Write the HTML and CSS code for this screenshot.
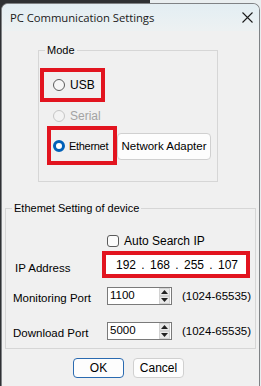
FILE: index.html
```html
<!DOCTYPE html>
<html>
<head>
<meta charset="utf-8">
<link rel="stylesheet" href="styles.css">
</head>
<body>
<div class="window">
  <div class="titlebar">
    <span class="title">PC Communication Settings</span>
    <svg class="close" width="11" height="11" viewBox="0 0 11 11"><path d="M0.5 0.5 L10.5 10.5 M10.5 0.5 L0.5 10.5" stroke="#1b1b1b" stroke-width="1.1" fill="none"/></svg>
  </div>

  <fieldset class="group mode">
    <legend>Mode</legend>
    <div class="hl usb">
      <span class="radio"></span><span class="lbl">USB</span>
    </div>
    <div class="row serial">
      <span class="radio disabled"></span><span class="lbl dim">Serial</span>
    </div>
    <div class="eth-row">
      <div class="hl eth">
        <span class="radio checked"></span><span class="lbl">Ethernet</span>
      </div>
      <button class="btn netadapter">Network Adapter</button>
    </div>
  </fieldset>

  <fieldset class="group ethset">
    <legend>Ethemet Setting of device</legend>
    <div class="row auto">
      <span class="check"></span><span class="lbl">Auto Search IP</span>
    </div>
    <div class="field-row ip-row">
      <span class="flabel ip-label">IP Address</span>
      <div class="hl ipbox">
        <div class="ipfield">
          <span class="oct">192</span><span class="dot">.</span>
          <span class="oct">168</span><span class="dot">.</span>
          <span class="oct">255</span><span class="dot">.</span>
          <span class="oct">107</span>
        </div>
      </div>
    </div>
    <div class="field-row port-row mon">
      <span class="flabel">Monitoring Port</span>
      <div class="spin">
        <span class="val">1100</span>
        <span class="spinbtns">
          <span class="sb"><svg width="7" height="4" viewBox="0 0 7 4"><path d="M3.5 0 L7 4 L0 4 Z" fill="#222"/></svg></span>
          <span class="sb"><svg width="7" height="4" viewBox="0 0 7 4"><path d="M0 0 L7 0 L3.5 4 Z" fill="#222"/></svg></span>
        </span>
      </div>
      <span class="range">(1024-65535)</span>
    </div>
    <div class="field-row port-row dl">
      <span class="flabel">Download Port</span>
      <div class="spin">
        <span class="val">5000</span>
        <span class="spinbtns">
          <span class="sb"><svg width="7" height="4" viewBox="0 0 7 4"><path d="M3.5 0 L7 4 L0 4 Z" fill="#222"/></svg></span>
          <span class="sb"><svg width="7" height="4" viewBox="0 0 7 4"><path d="M0 0 L7 0 L3.5 4 Z" fill="#222"/></svg></span>
        </span>
      </div>
      <span class="range">(1024-65535)</span>
    </div>
  </fieldset>

  <div class="actions">
    <button class="btn ok">OK</button>
    <button class="btn cancel">Cancel</button>
  </div>
</div>
</body>
</html>
```
FILE: styles.css
```css
html, body {
  margin: 0;
  padding: 0;
}
body {
  width: 261px;
  height: 386px;
  overflow: hidden;
  background: linear-gradient(to right, #2f3134 0, #2f3134 150px, #e9eef0 150px);
  font-family: "Liberation Sans", Arial, sans-serif;
  font-size: 11px;
  color: #000;
}
.window {
  margin: 3px 0 0 1px;
  width: 259px;
  height: 383px;
  box-sizing: border-box;
  border: 1px solid #7f8285;
  border-bottom: none;
  border-radius: 7px 7px 0 0;
  background: #f0f0f0;
  overflow: hidden;
  display: flex;
  flex-direction: column;
  align-items: flex-start;
}
.titlebar {
  width: 100%;
  height: 27px;
  flex: none;
  box-sizing: border-box;
  display: flex;
  align-items: center;
  justify-content: space-between;
  padding: 0 6px 0 8px;
  background: linear-gradient(#e3eef3, #edf1f2);
}
.title {
  font-family: "Open Sans", "Noto Sans", sans-serif;
  font-size: 11.3px;
  color: #1a1a1a;
  letter-spacing: -0.05px;
}
.close {
  display: block;
}

.group {
  margin: 0;
  padding: 0;
  border: 1px solid #d6d6d6;
  box-sizing: border-box;
  display: flex;
  flex-direction: column;
  align-items: flex-start;
  min-width: 0;
}
.group legend {
  margin-left: 6px;
  padding: 0 2px;
  line-height: 14px;
  font-size: 11px;
}
.mode {
  margin: 12px 0 0 36px;
  width: 180px;
  padding-bottom: 16px;
}
.ethset {
  margin: 19px 0 0 3px;
  width: 251px;
  padding-bottom: 8px;
}

.hl {
  border: 4px solid #e2141f;
  box-sizing: border-box;
  display: flex;
  align-items: center;
}
.usb {
  margin: 11px 0 0 1px;
  width: 65px;
  height: 34px;
  padding-left: 9px;
  gap: 5px;
  font-size: 12px;
}
.row {
  display: flex;
  align-items: center;
  gap: 5px;
}
.serial {
  margin: 6px 0 0 14px;
  height: 16px;
  font-size: 12px;
}
.lbl.dim {
  color: #a3a3a3;
}
.eth-row {
  margin: 2px 0 0 8px;
  display: flex;
  align-items: center;
}
.eth {
  width: 70px;
  height: 39px;
  padding-left: 2px;
  gap: 4px;
  font-size: 11px;
  letter-spacing: -0.3px;
  white-space: nowrap;
}

.radio {
  width: 12px;
  height: 12px;
  box-sizing: border-box;
  border: 1px solid #5b5b5b;
  border-radius: 50%;
  background: #f6f6f6;
  flex: none;
}
.radio.disabled {
  border-color: #c6c6c6;
  background: #f3f3f3;
}
.radio.checked {
  border: 3.5px solid #0060b8;
  background: #ffffff;
}

.btn {
  font-family: "Liberation Sans", Arial, sans-serif;
  font-size: 11px;
  color: #000;
  background: #fdfdfd;
  border: 1px solid #d0d0d0;
  border-radius: 4px;
  padding: 0;
  box-sizing: border-box;
}
.netadapter {
  width: 94px;
  height: 27px;
  margin-top: 1px;
  font-size: 11.5px;
}

.auto {
  margin: 20px 0 0 101px;
  height: 12px;
  font-size: 12px;
}
.check {
  width: 12px;
  height: 12px;
  box-sizing: border-box;
  border: 1px solid #5b5b5b;
  border-radius: 3px;
  background: #fbfbfb;
  flex: none;
}

.field-row {
  display: flex;
  align-items: center;
}
.flabel {
  font-size: 11.5px;
  box-sizing: border-box;
}
.ip-row {
  margin-top: 4px;
}
.ip-label {
  width: 96px;
  padding-left: 9px;
  padding-top: 6px;
}
.ipbox {
  width: 148px;
  height: 27px;
}
.ipfield {
  width: 100%;
  height: 100%;
  background: #ffffff;
  display: flex;
  align-items: center;
  padding-left: 8px;
  box-sizing: border-box;
  font-size: 12px;
}
.oct {
  width: 24px;
  text-align: center;
}
.dot {
  width: 10px;
  text-align: center;
}

.port-row .flabel {
  width: 101px;
  padding-left: 7px;
  padding-top: 4px;
}
.mon {
  margin-top: 9px;
}
.dl {
  margin-top: 17px;
}
.spin {
  width: 65px;
  height: 18px;
  box-sizing: border-box;
  border: 1px solid #7a7a7a;
  background: #fff;
  display: flex;
  align-items: flex-start;
  justify-content: space-between;
  padding: 0 1px 0 2px;
}
.val {
  font-size: 11.5px;
  line-height: 13px;
  padding-top: 1px;
}
.spinbtns {
  display: flex;
  flex-direction: column;
  gap: 0;
  padding-top: 0;
}
.sb {
  width: 11px;
  height: 8px;
  box-sizing: border-box;
  background: #e9e9e9;
  border: 1px solid #d2d2d2;
  display: flex;
  align-items: center;
  justify-content: center;
}
.sb svg {
  display: block;
}
.range {
  margin-left: 10px;
  font-size: 11.5px;
}

.actions {
  width: 100%;
  box-sizing: border-box;
  margin-top: 9px;
  display: flex;
  justify-content: center;
  gap: 9px;
  padding-right: 4px;
}
.ok, .cancel {
  width: 51px;
  height: 20px;
  font-size: 12px;
}
.ok {
  border: 1.5px solid #2a6ab0;
}
```
